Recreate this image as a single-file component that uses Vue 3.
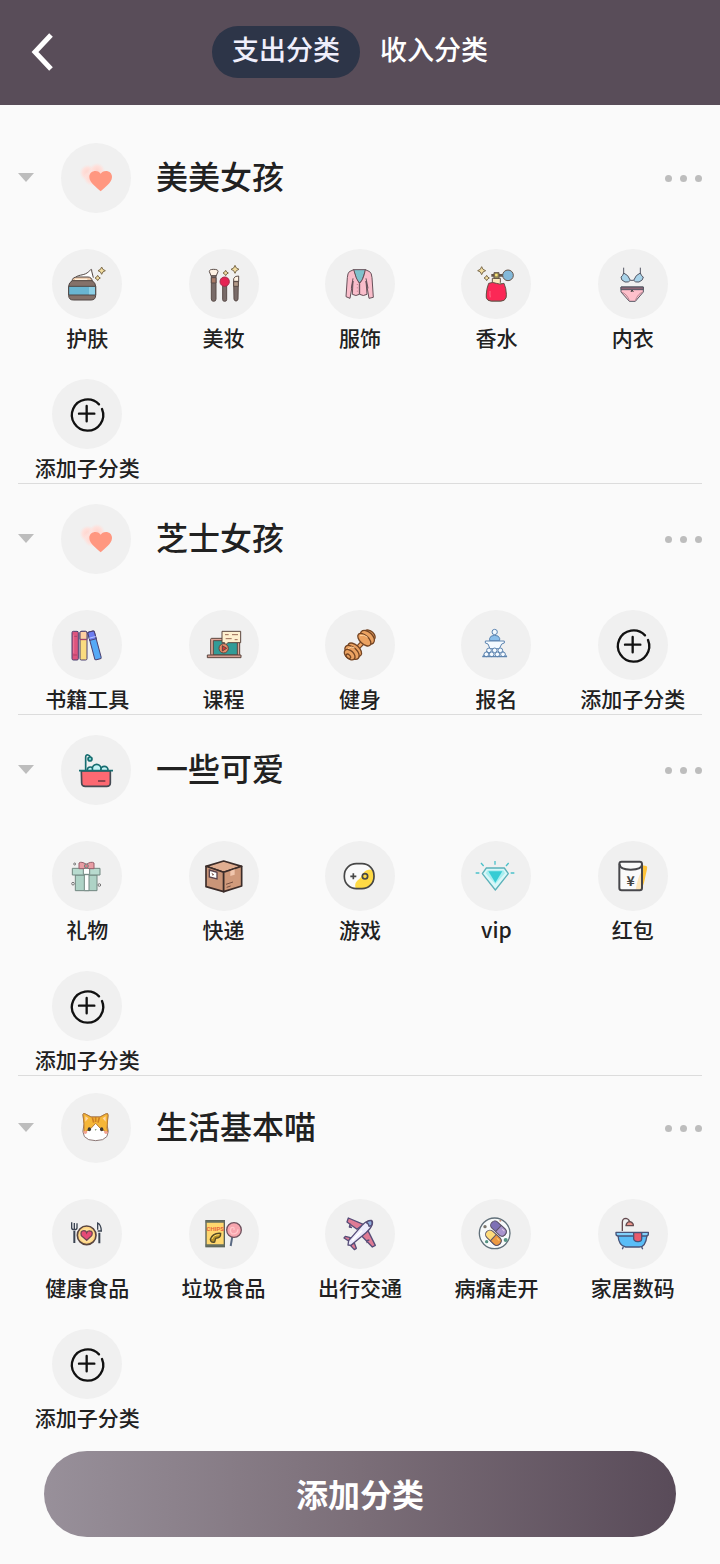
<script setup>
import { ref } from "vue";

const tabs = ["支出分类", "收入分类"];
const activeTab = ref(0);

// every icon is drawn on a 210 x 210 canvas
const star = (x, y, r) =>
  `<path d="M${x} ${y - r}Q${x + 2} ${y - 2} ${x + r} ${y}Q${x + 2} ${y + 2} ${x} ${y + r}Q${x - 2} ${y + 2} ${x - r} ${y}Q${x - 2} ${y - 2} ${x} ${y - r}Z" fill="#f2dda0" stroke="#7d6b4a" stroke-width="3"/>`;

const icons = {
  add: `<g fill="none" stroke="#111" stroke-width="7" stroke-linecap="round">
    <path d="M141 76A47 47 0 1 0 150 90M104 81V127M81 104H127"/></g>`,
  heart: `<defs><radialGradient id="blush"><stop offset="0" stop-color="#ffd3cb"/><stop offset=".6" stop-color="#ffe0db"/><stop offset="1" stop-color="#f8e7e4" stop-opacity="0"/></radialGradient></defs>
    <circle cx="80" cy="89" r="25" fill="url(#blush)"/><circle cx="108" cy="84" r="25" fill="url(#blush)"/><circle cx="92" cy="104" r="25" fill="url(#blush)"/>
    <path d="M119 145C109 134 85 120 85 102C85 90 94 84 103 84C111 84 116 88 119 92C122 88 127 84 135 84C144 84 153 90 153 102C153 120 129 134 119 145Z" fill="#ff9780"/>`,
  cream: `<g stroke="#514744" stroke-width="3" stroke-linejoin="round">
    <path d="M72 84C82 76 98 80 110 68C117 61 120 58 119 66L124 86" fill="#fff"/>
    <path d="M60 97Q61 84 75 84H108Q119 84 121 97Z" fill="#e9c4a4"/>
    <path d="M61 95H120Q131 101 131 112V139Q131 153 117 153H64Q50 153 50 139V112Q50 101 61 95Z" fill="#84716a"/>
    <path d="M50 112H131V138H50Z" fill="#69b5d2"/></g>
    <path d="M111 114H129V136H111Z" fill="#8ed0e6"/><path d="M69 91H106" stroke="#fff0dc" stroke-width="4"/>
    ${star(149, 65, 11)}${star(137, 87, 8)}`,
  brushes: `<g stroke="#5b4d49" stroke-width="3" stroke-linejoin="round">
    <path d="M61 68Q60 61 74 61Q88 61 87 68L81 82H67Z" fill="#fff3e4"/><path d="M67 80H81V150Q81 157 74 157Q67 157 67 150Z" fill="#796b68"/><path d="M67 86H81V102H67Z" fill="#a87965"/>
    <path d="M101 109H113V152Q113 157 107 157Q101 157 101 152Z" fill="#796b68"/><circle cx="107" cy="98" r="14" fill="#e52453" stroke="#a42b4a"/>
    <path d="M134 89Q137 80 149 81V98H134Z" fill="#fff3e4"/><path d="M134 97H148L147 152Q141 161 135 152Z" fill="#796b68"/><path d="M134 98H148V112H134Z" fill="#b39a89"/></g>
    ${star(138, 61, 12)}${star(110, 72, 8)}`,
  jacket: `<g stroke="#665059" stroke-width="3" stroke-linejoin="round">
    <path d="M85 62H122L112 92L104 102L95 92Z" fill="#7fc2cc"/>
    <path d="M86 62L73 68Q68 72 67 86L63 143L75 148L84 96L82 136Q93 143 103 136V103Q93 91 86 62Z" fill="#f9bdca"/>
    <path d="M121 62L134 68Q140 72 141 86L145 145L132 148L123 96L126 136Q115 143 104 136V103Q116 91 121 62Z" fill="#f9bdca"/>
    <path d="M84 88L79 118M123 88L129 118" fill="none"/></g><path d="M97 105V132" stroke="#a65f72" stroke-width="2" stroke-dasharray="3 7"/>`,
  perfume: `<g stroke="#645348" stroke-width="3" stroke-linejoin="round">
    <path d="M94 88H118V101L130 115Q144 156 119 156H91Q67 156 81 115L94 101Z" fill="#fbe9bd"/>
    <path d="M83 103Q95 98 106 103T129 103Q136 119 136 136Q137 156 119 156H92Q73 156 76 136Q77 117 83 103Z" fill="#fb2856"/>
    <path d="M91 79H126" stroke-width="8"/><path d="M99 71H114V88H99Z" fill="#9c955b"/>
    <circle cx="141" cy="79" r="16" fill="#83b9da"/></g><circle cx="106" cy="78" r="4" fill="#ffe373"/><path d="M87 126Q86 137 88 145" fill="none" stroke="#ff5b7c" stroke-width="4"/>
    ${star(62, 65, 12)}${star(77, 87, 8)}`,
  lingerie: `<g stroke="#555764" stroke-width="3" stroke-linejoin="round">
    <path d="M77 56V76M127 56V76" fill="none"/>
    <path d="M77 72Q91 77 97 94Q93 101 81 99Q68 94 69 84Q74 82 77 72ZM127 72Q113 77 107 94Q111 101 123 99Q136 94 136 84Q130 82 127 72ZM97 94H107" fill="#a8d3e9"/>
    <path d="M69 114H136V129L112 157H94L69 129Z" fill="#ffc0cb"/><path d="M69 114H136V122H69Z" fill="#8d6675"/>
    <path d="M71 130Q87 134 94 155M134 130Q119 134 112 155" fill="none" stroke="#b38590"/></g><path d="M99 129L102 123L106 129" fill="none" stroke="#333" stroke-width="3"/>`,
  books: `<g stroke="#4b4071" stroke-width="3"><rect x="60" y="64" width="19" height="86" rx="4" fill="#dd547e"/>
    <rect x="84" y="64" width="21" height="86" rx="4" fill="#fbdc7f"/><path d="M84 68Q84 64 90 64H100Q105 64 105 69V88H84Z" fill="#ffd0a1"/>
    <g transform="rotate(-15 117 105)"><rect x="117" y="66" width="20" height="86" rx="4" fill="#55a9f6"/><path d="M117 70Q117 66 122 66H132Q137 66 137 71V91H117Z" fill="#6c7df1"/><path d="M117 84H137" stroke="#b6c5ff"/></g></g>
    <path d="M64 79H75M64 135H75M84 89H105" stroke="#ae4169" stroke-width="3"/><path d="M65 74V130" stroke="#ee7a99" stroke-width="3"/>`,
  course: `<g stroke="#5c463f" stroke-width="3" stroke-linejoin="round"><rect x="65" y="85" width="87" height="51" rx="3" fill="#dfa697"/><rect x="73" y="92" width="72" height="43" fill="#329c97"/>
    <path d="M55 135H156V143H55Z" fill="#d49e92"/><path d="M99 64H155V98H117L107 107V98H99Z" fill="#fff0cf"/>
    <circle cx="104" cy="115" r="14" fill="#e68a68"/><path d="M100 107V123L113 115Z" fill="#d73636"/></g>
    <path d="M108 74H119M129 74H147M110 86H128M137 89H146" stroke="#9c6a55" stroke-width="3"/>`,
  dumbbell: `<g stroke="#744524" stroke-width="4"><path d="M91 121L119 91" stroke-width="15"/><path d="M91 121L119 91" stroke="#f2a766" stroke-width="8"/>
    <g fill="#eba261"><ellipse cx="134" cy="76" rx="13" ry="19" transform="rotate(-47 134 76)"/><ellipse cx="127" cy="82" rx="16" ry="25" transform="rotate(-47 127 82)"/><ellipse cx="118" cy="89" rx="13" ry="24" transform="rotate(-47 118 89)"/>
    <ellipse cx="89" cy="119" rx="14" ry="25" transform="rotate(-47 89 119)"/><ellipse cx="81" cy="127" rx="15" ry="26" transform="rotate(-47 81 127)"/><ellipse cx="74" cy="134" rx="12" ry="19" transform="rotate(-47 74 134)"/><ellipse cx="70" cy="139" rx="5" ry="8" transform="rotate(-47 70 139)"/></g></g>
    <path d="M69 116Q80 107 89 114M105 77Q116 72 128 82" fill="none" stroke="#ffd19c" stroke-width="3"/>`,
  lecture: `<g stroke="#5e85b0" stroke-width="3" fill="#f4faff"><circle cx="101" cy="66" r="8"/><path d="M86 92V85Q88 76 101 76Q114 76 116 85V92Z" fill="#8abeea"/>
    <path d="M73 93H130V99L122 102L115 116H87L81 102L73 99Z"/><path d="M84 115L65 139M119 115L137 139"/><circle cx="84" cy="121" r="7"/><circle cx="101" cy="121" r="7"/><circle cx="118" cy="121" r="7"/>
    <circle cx="76" cy="133" r="7"/><circle cx="92" cy="133" r="7"/><circle cx="109" cy="133" r="7"/><circle cx="126" cy="133" r="7"/><path d="M64 140H138" stroke-width="4"/></g>`,
  bath: `<g stroke="#176d70" stroke-width="5" stroke-linejoin="round"><g fill="#c4f3f5"><circle cx="88" cy="105" r="9"/><circle cx="130" cy="105" r="11"/><circle cx="107" cy="101" r="13"/></g>
    <path d="M74 107V66Q74 59 81 60Q87 61 88 68" fill="none"/><circle cx="87" cy="72" r="6" fill="#78d9d5"/>
    <path d="M61 108H148V144Q148 154 137 154H73Q62 154 62 144Z" fill="#fc6972" stroke="#454b54"/><path d="M54 107H156" fill="none"/></g><path d="M111 138H133" stroke="#713742" stroke-width="5"/>`,
  gift: `<g stroke="#718780" stroke-width="3"><path d="M70 102H135V149H70Z" fill="#aed3c6"/><path d="M61 82H144V102H61Z" fill="#b8dbcf"/><path d="M97 101H111V149H97Z" fill="#fff"/><path d="M94 82H113V100H94Z" fill="#fff"/>
    <path d="M103 70Q88 60 81 66V83H96L103 78L111 83H126V66Q118 60 103 70Z" fill="#e99da4" stroke="#965f6b"/><circle cx="103" cy="75" r="6" fill="#d97c88"/></g>
    <g fill="none" stroke="#777" stroke-width="3"><circle cx="68" cy="69" r="3"/><circle cx="63" cy="128" r="4"/><circle cx="142" cy="132" r="4"/></g>`,
  parcel: `<g stroke="#3b2c29" stroke-width="5" stroke-linejoin="round"><path d="M104 60L158 76L104 94L51 76Z" fill="#e0ae91"/><path d="M51 76L104 94V152L51 137Z" fill="#c99578"/><path d="M104 94L158 76V135L104 152Z" fill="#d09a7b"/></g>
    <path d="M124 90L137 85V101L124 105Z" fill="#f0c6ad"/><path d="M61 87L84 94V114L61 108Z" fill="#fff" stroke="#59434c" stroke-width="4"/><path d="M68 97L74 101L69 102M111 130L132 123M113 139L125 135" fill="none" stroke="#764f41" stroke-width="3"/>`,
  game: `<defs><clipPath id="pad"><rect x="57" y="68" width="91" height="75" rx="36"/></clipPath></defs>
    <rect x="57" y="68" width="91" height="75" rx="36" fill="#fafafa"/><path clip-path="url(#pad)" d="M150 86Q122 82 113 98Q108 112 96 120Q86 130 94 146H150Z" fill="#ffda45"/>
    <g fill="none" stroke="#474747" stroke-width="5"><rect x="58" y="68" width="89" height="75" rx="36"/><path d="M76 106H94M85 97V115"/><circle cx="120" cy="106" r="8"/></g>`,
  diamond: `<path d="M76 81H130L142 98L103 147L64 98Z" fill="#d9f7f8" stroke="#5bb1b9" stroke-width="4" stroke-linejoin="round"/><path d="M80 88H127L132 97L103 129L74 97Z" fill="#a8eef0"/><path d="M82 91H124L103 125Z" fill="#37ccd4"/>
    <path d="M102 60V71M60 66L68 75M143 66L135 75M44 96H55M149 96H160" stroke="#4bc1ca" stroke-width="4"/>`,
  packet: `<path d="M132 73L145 75Q149 76 147 85L138 125Q136 136 130 139Z" fill="#ffc339"/>
    <rect x="64" y="62" width="68" height="86" rx="7" fill="#fafafa"/><path d="M113 146Q120 105 131 92V146Z" fill="#ffe6b8"/>
    <g fill="none" stroke="#47474b" stroke-width="6"><rect x="64" y="62" width="68" height="86" rx="7"/><path d="M65 70Q65 86 98 86Q132 86 132 70"/></g>
    <text x="98" y="134" text-anchor="middle" font-family="Noto Sans CJK SC, sans-serif" font-size="42" font-weight="700" fill="#444">¥</text>`,
  cat: `<path d="M69 91L66 65Q66 59 73 63L90 72H117L134 63Q142 59 141 67L138 94Q154 143 104 143Q54 143 69 94Z" fill="#fff" stroke="#8b7775" stroke-width="3"/>
    <path d="M69 91L66 65Q66 59 73 63L90 72H117L134 63Q142 59 141 67L138 105Q141 115 139 119L119 107L104 91L89 107L69 119Z" fill="#f5b637" stroke="#b77b36" stroke-width="3"/>
    <path d="M73 70L82 76L73 86M134 70L125 76L134 86" fill="#ffd7a8"/><path d="M94 73L98 89M104 72V87M115 73L111 89" stroke="#cf8023" stroke-width="5"/>
    <ellipse cx="85" cy="109" rx="5" ry="6" fill="#3d3834"/><ellipse cx="122" cy="109" rx="5" ry="6" fill="#3d3834"/><path d="M101 109H107L104 113Z" fill="#64804e"/><circle cx="73" cy="118" r="5" fill="#f3a190"/><circle cx="135" cy="118" r="5" fill="#f3a190"/>`,
  meal: `<g fill="none" stroke="#3b4452" stroke-width="4"><path d="M59 70V86Q59 92 67 92Q75 92 75 86V73M67 72V90M137 92V72Q147 76 148 96H137"/><path d="M67 95V132M142 101V133" stroke-width="6"/></g>
    <circle cx="104" cy="109" r="28" fill="#ffd582" stroke="#5a4640" stroke-width="5"/><circle cx="104" cy="109" r="21" fill="#ffe09b"/><path d="M104 124L88 110Q84 95 96 95Q102 95 104 101Q107 95 114 96Q124 97 119 110Z" fill="#e74b76" stroke="#714554" stroke-width="4"/>`,
  snack: `<rect x="51" y="65" width="55" height="78" fill="#ffd76e" stroke="#596159" stroke-width="4"/><path d="M50 68H107M50 139H107" stroke="#667062" stroke-width="7"/>
    <text x="79" y="97" text-anchor="middle" font-family="Roboto, sans-serif" font-size="18" font-weight="700" fill="#e7663c">CHIPS</text>
    <path d="M64 121Q71 101 95 103Q96 118 80 118L77 129Q65 132 64 121Z" fill="#b68f25" stroke="#554b28" stroke-width="4"/><path d="M69 120Q73 108 91 107" fill="none" stroke="#ffe070" stroke-width="3"/>
    <path d="M130 112L125 141" stroke="#596982" stroke-width="6"/><circle cx="135" cy="93" r="22" fill="#f7a5ae" stroke="#70535f" stroke-width="4"/><path d="M135 93Q137 82 127 86Q120 96 129 104Q146 107 147 91" fill="none" stroke="#ffc6c9" stroke-width="4"/>`,
  plane: `<g stroke="#564d78" stroke-width="4" stroke-linejoin="round"><path d="M96 91L66 69L70 57L115 76ZM126 89L151 139L142 144L108 109ZM76 116L61 112L57 117L71 126ZM88 132L94 148L88 152L76 139Z" fill="#df7b95"/>
    <path d="M76 74L73 84L81 86M133 123L125 125L127 132" fill="#b56a8c"/><path d="M113 77Q127 63 139 64Q144 67 142 75Q137 90 123 101L78 139L69 138L71 125Z" fill="#eceafc"/><path d="M123 70Q133 63 140 66Q143 72 140 79L132 82Q132 74 123 70Z" fill="#8faddc"/></g><path d="M82 124L111 95" stroke="#fff" stroke-width="5"/>`,
  pills: `<circle cx="101" cy="103" r="46" fill="#f7fafa" stroke="#61707a" stroke-width="4"/>
    <g stroke="#5c5366" stroke-width="3"><g transform="rotate(43 112 89)"><rect x="85" y="76" width="54" height="25" rx="12" fill="#7e70b5"/><path d="M112 76H127Q139 76 139 89Q139 101 127 101H112Z" fill="#a994cd"/><path d="M121 82H130" stroke="#e0c7e8"/></g>
    <g transform="rotate(43 97 116)"><rect x="70" y="103" width="54" height="26" rx="13" fill="#ffdc7b"/><path d="M97 103H111Q124 103 124 116Q124 129 111 129H97Z" fill="#ed9942"/><path d="M106 110H116" stroke="#ffd173"/></g></g>
    <g fill="#7a756c"><circle cx="72" cy="83" r="5"/><circle cx="77" cy="128" r="5" fill="#559482"/><circle cx="134" cy="123" r="6" fill="#559482"/></g><circle cx="118" cy="65" r="3" fill="#c98e79"/>`,
  tub: `<g stroke="#485479" stroke-width="4" stroke-linejoin="round"><path d="M73 96V70Q73 58 84 58Q92 59 95 68" fill="none" stroke="#654b50"/><path d="M84 80Q86 68 96 68Q107 72 106 80Z" fill="#ea9489" stroke="#654b50"/>
    <path d="M60 109H147Q143 144 124 144H83Q62 141 60 109Z" fill="#59bdf7"/><path d="M54 100H151V105Q151 111 144 111H61Q54 111 54 105Z" fill="#82d0fa"/><path d="M107 101H131V119Q131 129 119 128Q107 126 107 119Z" fill="#e85a6c"/>
    <path d="M76 143L73 151M131 143L134 151" fill="none"/></g>`,
};

const groups = ref([
  {
    name: "美美女孩",
    icon: "heart",
    open: true,
    children: [
      { name: "护肤", icon: "cream" },
      { name: "美妆", icon: "brushes" },
      { name: "服饰", icon: "jacket" },
      { name: "香水", icon: "perfume" },
      { name: "内衣", icon: "lingerie" },
    ],
  },
  {
    name: "芝士女孩",
    icon: "heart",
    open: true,
    children: [
      { name: "书籍工具", icon: "books" },
      { name: "课程", icon: "course" },
      { name: "健身", icon: "dumbbell" },
      { name: "报名", icon: "lecture" },
    ],
  },
  {
    name: "一些可爱",
    icon: "bath",
    open: true,
    children: [
      { name: "礼物", icon: "gift" },
      { name: "快递", icon: "parcel" },
      { name: "游戏", icon: "game" },
      { name: "vip", icon: "diamond" },
      { name: "红包", icon: "packet" },
    ],
  },
  {
    name: "生活基本喵",
    icon: "cat",
    open: true,
    children: [
      { name: "健康食品", icon: "meal" },
      { name: "垃圾食品", icon: "snack" },
      { name: "出行交通", icon: "plane" },
      { name: "病痛走开", icon: "pills" },
      { name: "家居数码", icon: "tub" },
    ],
  },
]);

const withAdd = (children) => [...children, { name: "添加子分类", icon: "add" }];
</script>

<template>
  <div class="page">
    <header class="topbar">
      <button class="back" type="button" aria-label="返回">
        <svg viewBox="0 0 24 40"><path d="M21 3L5 20L21 37" /></svg>
      </button>
      <nav class="tabs">
        <button
          v-for="(tab, index) in tabs"
          :key="tab"
          type="button"
          class="tab"
          :class="{ active: activeTab === index }"
          @click="activeTab = index"
        >
          {{ tab }}
        </button>
      </nav>
    </header>

    <main class="list">
      <section v-for="group in groups" :key="group.name" class="group">
        <div class="groupHead">
          <button
            type="button"
            class="arrow"
            :class="{ closed: !group.open }"
            aria-label="展开"
            :aria-expanded="group.open"
            @click="group.open = !group.open"
          >
            <svg viewBox="0 0 18 10"><path d="M0 0H16L8 9Z" /></svg>
          </button>
          <svg class="icon" viewBox="0 0 210 210" v-html="icons[group.icon]"></svg>
          <h2 class="groupName">{{ group.name }}</h2>
          <button type="button" class="more" aria-label="更多">
            <span v-for="i in 3" :key="i" class="dot"></span>
          </button>
        </div>
        <div v-show="group.open" class="children">
          <button
            v-for="item in withAdd(group.children)"
            :key="item.name"
            type="button"
            class="child"
          >
            <svg class="icon" viewBox="0 0 210 210" v-html="icons[item.icon]"></svg>
            <span class="childName">{{ item.name }}</span>
          </button>
        </div>
      </section>
    </main>

    <footer class="bottom">
      <button type="button" class="addGroup">添加分类</button>
    </footer>
  </div>
</template>

<style>
body {
  margin: 0;
  background: #fafafa;
}
</style>

<style scoped>
.page {
  min-height: 100vh;
  background: #fafafa;
  color: #212121;
  font-family: "Noto Sans CJK SC", sans-serif;
  font-weight: 500;
}

button {
  padding: 0;
  border: 0;
  background: none;
  color: inherit;
  font: inherit;
  cursor: pointer;
}

.topbar {
  display: grid;
  grid-template-columns: 1fr auto 1fr;
  align-items: center;
  height: 105px;
  padding: 0 30px 2px;
  box-sizing: border-box;
  background: #594d59;
  color: #fff;
}

.back {
  width: 24px;
  height: 40px;
}

.back svg {
  display: block;
  fill: none;
  stroke: #fff;
  stroke-width: 5;
}

.tabs {
  display: flex;
}

.tab {
  width: 148px;
  height: 52px;
  padding-bottom: 6px;
  border-radius: 26px;
  font-size: 27px;
  line-height: 46px;
}

.tab.active {
  background: #2d3548;
  color: #f0effc;
}

.list {
  padding: 18px 18px 0;
}

.group {
  padding-top: 20px;
  border-bottom: 1px solid #dcdcdc;
}

.group:last-child {
  padding-top: 17px;
  border-bottom: 0;
}

.groupHead {
  display: flex;
  align-items: center;
  gap: 25px;
}

.arrow {
  width: 18px;
  height: 10px;
}

.arrow svg {
  display: block;
  fill: #bdbdbd;
}

.arrow.closed {
  transform: rotate(-90deg);
}

.icon {
  flex: none;
  width: 70px;
  height: 70px;
  border-radius: 50%;
  background: #f0f0f0;
}

.groupName {
  flex: 1;
  margin: 0;
  padding-bottom: 6px;
  font-size: 32px;
  font-weight: 500;
  line-height: 48px;
}

.more {
  display: flex;
  gap: 8px;
  padding: 10px 0;
}

.dot {
  width: 7px;
  height: 7px;
  border-radius: 50%;
  background: #bdbdbd;
}

.children {
  display: grid;
  grid-template-columns: repeat(5, 1fr);
  row-gap: 26px;
  padding: 36px 1px 0;
}

.child {
  display: flex;
  flex-direction: column;
  align-items: center;
  gap: 2px;
}

.childName {
  font-size: 21px;
  line-height: 32px;
  white-space: nowrap;
}

.bottom {
  padding: 18px 44px 27px;
}

.addGroup {
  width: 100%;
  height: 86px;
  padding-bottom: 2px;
  border-radius: 43px;
  background: linear-gradient(90deg, #98909a, #7b6e78 50%, #594b59);
  color: #fff;
  font-size: 32px;
  font-weight: 700;
}
</style>
